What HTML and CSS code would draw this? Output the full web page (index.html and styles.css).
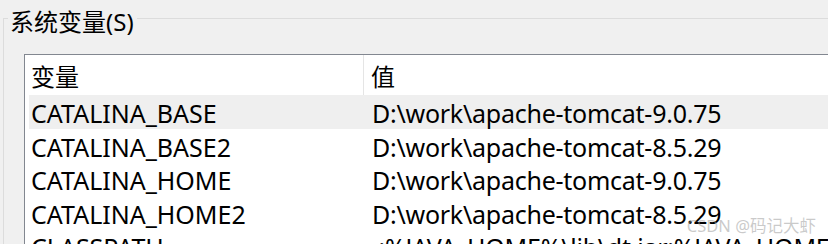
FILE: index.html
```html
<!DOCTYPE html>
<html lang="zh-CN">
  <head>
    <meta charset="UTF-8" />
    <title>系统变量</title>
    <link rel="stylesheet" href="styles.css">
  </head>
  <body>
    <div class="group">
      <div class="group-title">系统变量(S)</div>

      <div class="list">
        <div class="list-head">
          <div class="col-name">变量</div>
          <div class="col-value">值</div>
        </div>
        <div class="row hover">
          <div class="col-name">CATALINA_BASE</div>
          <div class="col-value">D:\work\apache-tomcat-9.0.75</div>
        </div>
        <div class="row">
          <div class="col-name">CATALINA_BASE2</div>
          <div class="col-value">D:\work\apache-tomcat-8.5.29</div>
        </div>
        <div class="row">
          <div class="col-name">CATALINA_HOME</div>
          <div class="col-value">D:\work\apache-tomcat-9.0.75</div>
        </div>
        <div class="row">
          <div class="col-name">CATALINA_HOME2</div>
          <div class="col-value">D:\work\apache-tomcat-8.5.29</div>
        </div>
        <div class="row">
          <div class="col-name">CLASSPATH</div>
          <div class="col-value">.;%JAVA_HOME%\lib\dt.jar;%JAVA_HOME%\lib\tools.jar</div>
        </div>
      </div>
    </div>

    <div class="watermark">CSDN @码记大虾</div>
  </body>
</html>
```

FILE: styles.css
```css
html,
body {
  height: 100%;
}

body {
  margin: 0;
  background-color: #f0f0f0;
  font-family: "Noto Sans", "Noto Sans CJK SC", sans-serif;
  color: #000;
  overflow: hidden;
  position: relative;
  display: flex;
  flex-direction: column;
}

.group {
  flex: 1;
  min-height: 0;
  display: flex;
  flex-direction: column;
  margin: 18px 0 0 3px;
  border-top: 1px solid #dcdcdc;
  border-left: 1px solid #dcdcdc;
}

.group-title {
  align-self: flex-start;
  margin: -12px 0 0 4px;
  padding: 0 3px 0 2px;
  background-color: #f0f0f0;
  font-size: 24px;
  line-height: 30px;
}

.list {
  flex: 1;
  min-height: 0;
  overflow: hidden;
  margin: 17px 0 0 20px;
  border-top: 1px solid #828790;
  border-left: 1px solid #828790;
  background-color: #fff;
}

.list-head,
.row {
  display: flex;
  white-space: nowrap;
}

.list-head {
  height: 40px;
  font-size: 24px;
}

.list-head .col-name,
.list-head .col-value {
  padding-top: 4px;
  line-height: 36px;
}

.row {
  box-sizing: border-box;
  height: 33.5px;
  padding-top: 4px;
  line-height: 29.5px;
  margin-left: 4px;
  font-size: 25px;
}

.row.hover {
  background-color: #efefef;
}

.col-name {
  width: 332px;
  padding-left: 6px;
  flex-shrink: 0;
}

.row .col-name {
  width: 333px;
  padding-left: 2px;
}

.list-head .col-name {
  border-right: 1px solid #e5e5e5;
}

.col-value {
  padding-left: 7px;
}

.row .col-value {
  padding-left: 8px;
  letter-spacing: -0.25px;
}

.watermark {
  position: absolute;
  right: 12px;
  bottom: 7px;
  font-size: 16.5px;
  color: rgba(150, 150, 150, 0.5);
}
```
